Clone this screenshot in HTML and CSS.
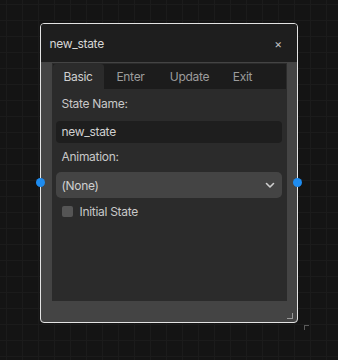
FILE: index.html
```html
<!DOCTYPE html>
<html lang="en">
<head>
    <meta charset="UTF-8">
    <title>State Node</title>
    <link rel="stylesheet" href="styles.css">
</head>
<body>
    <div class="canvas">
        <div class="node">
            <div class="node-header">
                <span class="node-title">new_state</span>
                <span class="node-close">&times;</span>
            </div>
            <div class="node-body">
                <div class="panel">
                    <div class="tabs">
                        <div class="tab tab-basic active">Basic</div>
                        <div class="tab tab-enter">Enter</div>
                        <div class="tab tab-update">Update</div>
                        <div class="tab tab-exit">Exit</div>
                    </div>
                    <div class="panel-content">
                        <div class="field-label">State Name:</div>
                        <div class="text-input">new_state</div>
                        <div class="field-label">Animation:</div>
                        <div class="select">
                            <span>(None)</span>
                            <svg width="10" height="7" viewBox="0 0 10 7"><path d="M1.5 1.5 L5 5 L8.5 1.5" fill="none" stroke="#cfcfcf" stroke-width="1.6" stroke-linecap="round" stroke-linejoin="round"/></svg>
                        </div>
                        <label class="check-row">
                            <span class="check-box"></span>
                            <span>Initial State</span>
                        </label>
                    </div>
                </div>
            </div>
            <!-- connection handles -->
            <span class="handle handle-left"></span>
            <span class="handle handle-right"></span>
            <span class="resize-grip"></span>
        </div>
        <span class="outer-grip"></span>
    </div>
</body>
</html>
```

FILE: styles.css
```css
html, body {
    margin: 0;
    padding: 0;
    background: #141414;
}
body {
    font-family: Inter, "Noto Sans", sans-serif;
    font-size: 12px;
    letter-spacing: -0.3px;
    color: #d2d2d2;
}
.canvas {
    position: relative;
    width: 338px;
    height: 360px;
    overflow: hidden;
    background-color: #141414;
    background-image:
        linear-gradient(to right, #1b1b1b 1px, transparent 1px),
        linear-gradient(to bottom, #1b1b1b 1px, transparent 1px);
    background-size: 16px 16px;
    background-position: 6px 4px;
}
.node {
    position: absolute;
    left: 40px;
    top: 23px;
    width: 258px;
    height: 300px;
    box-sizing: border-box;
    border: 1.5px solid #e4e4e4;
    border-radius: 4px;
    background: #444;
    display: flex;
    flex-direction: column;
}
.node-header {
    height: 38px;
    flex-shrink: 0;
    background: #1e1e1e;
    border-radius: 3px 3px 0 0;
    display: flex;
    align-items: center;
    justify-content: space-between;
    padding: 0 15px 0 8.5px;
}
.node-title {
    color: #d6d6d6;
}
.node-close {
    color: #bdbdbd;
}
.node-body {
    flex: 1;
    padding: 1px 10px 21px 10.5px;
    display: flex;
}
.panel {
    flex: 1;
    background: #2b2b2b;
    padding: 1px;
    display: flex;
    flex-direction: column;
}
.tabs {
    display: flex;
    height: 25px;
    background: #1c1c1c;
}
.tab {
    display: flex;
    align-items: center;
    justify-content: center;
    color: #9c9c9c;
}
.tab.active {
    background: #2b2b2b;
    color: #cfcfcf;
    border-radius: 3px 3px 0 0;
}
.tab-basic { width: 51px; }
.tab-enter { width: 54px; }
.tab-update { width: 64px; }
.tab-exit { width: 42px; }
.panel-content {
    padding: 8px 4px 0 3.5px;
    display: flex;
    flex-direction: column;
}
.field-label {
    height: 14px;
    line-height: 14px;
    padding-left: 5.5px;
    color: #c8c8c8;
    margin-bottom: 10px;
}
.text-input {
    height: 22px;
    line-height: 22px;
    background: #1e1e1e;
    border-radius: 4px;
    padding-left: 5.5px;
    color: #d0d0d0;
    margin-bottom: 7px;
}
.field-label + .select { margin-top: -2px; }
.select {
    height: 26px;
    background: #444;
    border-radius: 5px;
    display: flex;
    align-items: center;
    justify-content: space-between;
    padding: 0 7px 0 5.5px;
    color: #d0d0d0;
}
.check-row {
    display: flex;
    align-items: center;
    gap: 7px;
    margin-top: 6px;
    padding-left: 5.5px;
    color: #c8c8c8;
}
.check-box {
    width: 11px;
    height: 11px;
    background: #555;
    border-radius: 2px;
}
.handle {
    position: absolute;
    top: 154px;
    width: 9px;
    height: 9px;
    border-radius: 50%;
    background: #1e8cf0;
}
.handle-left { left: -5px; }
.handle-right { right: -5px; }
.resize-grip {
    position: absolute;
    right: 4px;
    bottom: 3px;
    width: 5px;
    height: 5px;
    border-right: 1.5px solid #9a9a9a;
    border-bottom: 1.5px solid #9a9a9a;
}
.outer-grip {
    position: absolute;
    left: 304px;
    top: 325px;
    width: 4px;
    height: 4px;
    border-left: 1.5px solid #5a5a5a;
    border-top: 1.5px solid #5a5a5a;
}
```
